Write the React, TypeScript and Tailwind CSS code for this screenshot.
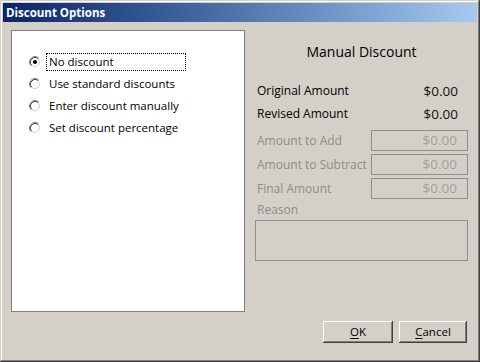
const FONT = "font-['Open_Sans',_'DejaVu_Sans',_sans-serif]";

// ─── Classic radio button ─────────────────────────────────────────────────────

function Radio({ checked }: { checked: boolean }) {
  return (
    <svg width="12" height="12" viewBox="0 0 12 12" className="shrink-0">
      <circle cx="6" cy="6" r="4.5" fill="#ffffff" />
      <path d="M2.11 9.89 A5.5 5.5 0 0 1 9.89 2.11" fill="none" stroke="#808080" strokeWidth="1" />
      <path d="M9.89 2.11 A5.5 5.5 0 0 1 2.11 9.89" fill="none" stroke="#ffffff" strokeWidth="1" />
      <path d="M2.82 9.18 A4.5 4.5 0 0 1 9.18 2.82" fill="none" stroke="#404040" strokeWidth="1" />
      <path d="M9.18 2.82 A4.5 4.5 0 0 1 2.82 9.18" fill="none" stroke="#d4d0c8" strokeWidth="1" />
      {checked && <circle cx="6" cy="6" r="2" fill="#000000" />}
    </svg>
  );
}

const OPTIONS = [
  'No discount',
  'Use standard discounts',
  'Enter discount manually',
  'Set discount percentage',
];

// ─── Right side rows ──────────────────────────────────────────────────────────

function AmountRow({ label }: { label: string }) {
  return (
    <div className="flex items-center justify-between h-[20px] pl-[2px]">
      <span className="text-[12px] text-black">{label}</span>
      <span className="text-[13.5px] text-[#111] pr-[10px]">$0.00</span>
    </div>
  );
}

function FieldRow({ label }: { label: string }) {
  return (
    <div className="flex items-center justify-between h-[21px] pl-[2px]">
      <span className="text-[12px] text-[#8d8d8d]">{label}</span>
      <div className="w-[97px] h-[21px] border border-[#8e8e8e] flex items-center justify-end pr-[10px] text-[13.5px] text-[#a0a0a0]">
        $0.00
      </div>
    </div>
  );
}

function Button({ label, width }: { label: string; width: string }) {
  const [first, ...rest] = label;
  return (
    <button
      type="button"
      className={`h-[22px] ${width} bg-[#d4d0c8] text-[11.5px] text-black flex items-center justify-center shadow-[inset_-1px_-1px_#404040,inset_1px_1px_#ffffff,inset_-2px_-2px_#808080,inset_2px_2px_#d4d0c8]`}
    >
      <span className="underline underline-offset-2">{first}</span>
      {rest.join('')}
    </button>
  );
}

export default function App() {
  return (
    <div
      className={`${FONT} w-[480px] h-[362px] bg-[#d4d0c8] p-[3px] flex flex-col shadow-[inset_-1px_-1px_#404040,inset_1px_1px_#d4d0c8,inset_-2px_-2px_#808080,inset_2px_2px_#ffffff]`}
    >
      {/* Title bar */}
      <div className="h-[19px] bg-gradient-to-r from-[#0a246a] to-[#a6caf0] flex items-center pl-[3px]">
        <span className="text-white font-bold text-[11.5px]">Discount Options</span>
      </div>

      <div className="flex mt-[8px] ml-[8px]">
        {/* Options list */}
        <div className="w-[234px] h-[282px] bg-white border border-[#808080] pt-[22px] pl-[17px] flex flex-col gap-[4px]">
          {OPTIONS.map((opt, i) => (
            <div key={opt} className="flex items-center h-[18px]">
              <Radio checked={i === 0} />
              <span
                className={`ml-[5px] pl-[2px] h-[18px] flex items-center text-[11.5px] text-black ${
                  i === 0 ? 'w-[140px] border border-dotted border-black' : 'border border-transparent'
                }`}
              >
                {opt}
              </span>
            </div>
          ))}
        </div>

        {/* Manual discount */}
        <div className="ml-[10px] w-[213px] flex flex-col">
          <div className="mt-[11px] h-[20px] flex items-center justify-center text-[14px] text-black">
            Manual Discount
          </div>
          <div className="mt-[20px] flex flex-col gap-[3px]">
            <AmountRow label="Original Amount" />
            <AmountRow label="Revised Amount" />
          </div>
          <div className="mt-[6px] flex flex-col gap-[3px]">
            <FieldRow label="Amount to Add" />
            <FieldRow label="Amount to Subtract" />
            <FieldRow label="Final Amount" />
          </div>
          <div className="mt-[2px] h-[18px] flex items-end pl-[2px] text-[12px] text-[#8d8d8d]">Reason</div>
          <div className="mt-[1px] h-[41px] border border-[#8e8e8e]" />
        </div>
      </div>

      <div className="flex justify-end gap-[6px] mt-[9px] pr-[10px]">
        <Button label="OK" width="w-[70px]" />
        <Button label="Cancel" width="w-[68px]" />
      </div>
    </div>
  );
}
